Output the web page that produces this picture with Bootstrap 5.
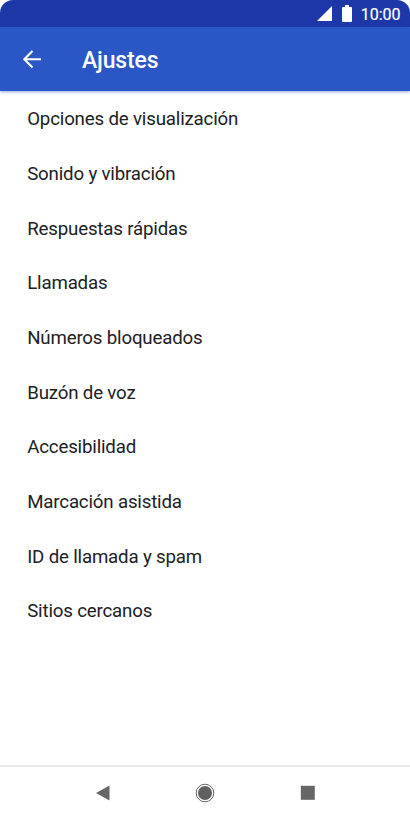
<!DOCTYPE html>
<html lang="es">
<head>
<meta charset="utf-8">
<meta name="viewport" content="width=device-width, initial-scale=1">
<title>Ajustes</title>
<link href="https://cdn.jsdelivr.net/npm/bootstrap@5.3.0/dist/css/bootstrap.min.css" rel="stylesheet">
<style>
body{font-family:Roboto,sans-serif;color:#202124}
.phone{height:820px;overflow:hidden}
.statusbar{height:27px;background:#1b37a8;border-radius:13px 13px 0 0;padding:0 9.5px 0 0;font-size:16px;line-height:1}
.clock{margin-left:9px;padding-top:2px;-webkit-text-stroke:.2px #fff}
.battery{margin-left:10px}
.appbar{height:64px;background:#2a56c6;padding:0 0 0 22px;box-shadow:0 1px 3px rgba(42,86,198,.5);z-index:1}
.appbar .title{font-size:23px;font-weight:500;letter-spacing:-.15px;line-height:1;margin:0 0 0 40px;padding-top:3px}
.settings .list-group-item{height:54.7px;padding:2.6px 27.2px 0;font-size:18.7px;letter-spacing:-.18px;line-height:1;color:#202124;background:transparent}
.softkeys{height:55px;gap:82.5px;border-top:2px solid #e8e8e8;padding:0 0 1px}
</style>
<script src="https://cdn.jsdelivr.net/npm/bootstrap@5.3.0/dist/js/bootstrap.bundle.min.js"></script>
</head>
<body class="bg-white">
<div class="phone d-flex flex-column">
  <div class="statusbar d-flex align-items-center justify-content-end text-white flex-shrink-0">
    <svg width="15" height="15" viewBox="0 0 15 15" fill="#fff"><path d="M15 0V15H0Z"/></svg>
    <svg class="battery" width="10" height="17" viewBox="0 0 10 17" fill="#fff"><path d="M3 0h4v2h2q1 0 1 1v13q0 1-1 1H1q-1 0-1-1V3q0-1 1-1h2z"/></svg>
    <span class="clock">10:00</span>
  </div>
  <header class="appbar d-flex align-items-center text-white position-relative flex-shrink-0">
    <svg width="20" height="20" viewBox="0 0 20 20" fill="none" stroke="#fff" stroke-width="2.1"><path d="M19 10.3H2.5M10.5 2.1L2.3 10.3l8.2 8.2"/></svg>
    <h1 class="title">Ajustes</h1>
  </header>
  <main class="flex-grow-1">
    <ul class="settings list-group list-group-flush">
      <li class="list-group-item border-0 d-flex align-items-center">Opciones de visualización</li>
      <li class="list-group-item border-0 d-flex align-items-center">Sonido y vibración</li>
      <li class="list-group-item border-0 d-flex align-items-center">Respuestas rápidas</li>
      <li class="list-group-item border-0 d-flex align-items-center">Llamadas</li>
      <li class="list-group-item border-0 d-flex align-items-center">Números bloqueados</li>
      <li class="list-group-item border-0 d-flex align-items-center">Buzón de voz</li>
      <li class="list-group-item border-0 d-flex align-items-center">Accesibilidad</li>
      <li class="list-group-item border-0 d-flex align-items-center">Marcación asistida</li>
      <li class="list-group-item border-0 d-flex align-items-center">ID de llamada y spam</li>
      <li class="list-group-item border-0 d-flex align-items-center">Sitios cercanos</li>
    </ul>
  </main>
  <nav class="softkeys d-flex align-items-center justify-content-center flex-shrink-0">
    <svg width="20" height="20" viewBox="0 0 20 20" fill="#666"><path d="M16.5 2.4v15.2L3 10z"/></svg>
    <svg width="20" height="20" viewBox="0 0 20 20"><circle cx="10" cy="10" r="8.8" fill="none" stroke="#666" stroke-width="1"/><circle cx="10" cy="10" r="7" fill="#606060"/></svg>
    <svg width="20" height="20" viewBox="0 0 20 20" fill="#666"><path d="M2.8 2.8h14v14h-14z"/></svg>
  </nav>
</div>
</body>
</html>
